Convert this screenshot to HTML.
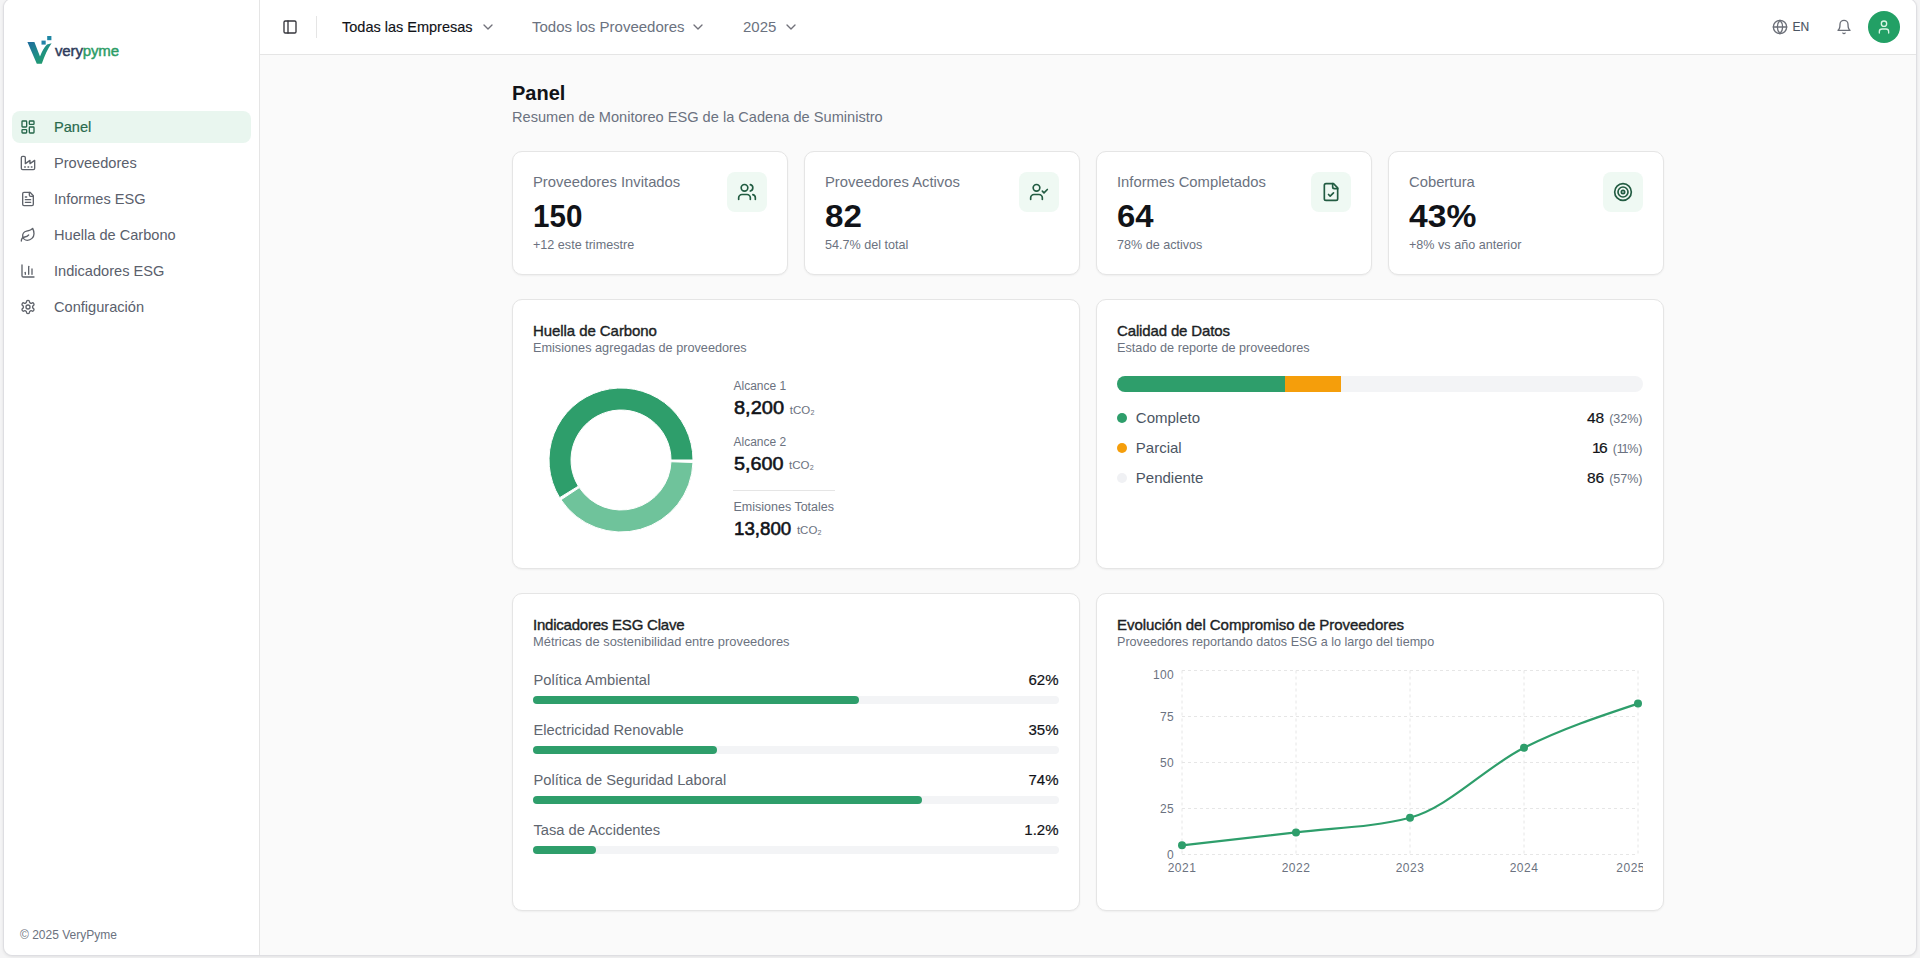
<!DOCTYPE html>
<html><head><meta charset="utf-8"><title>Panel</title>
<style>
*{box-sizing:border-box;margin:0;padding:0}
html,body{width:1920px;height:958px;overflow:hidden;background:#f4f4f5;font-family:"Liberation Sans", sans-serif;position:relative}
.t{position:absolute;white-space:nowrap;line-height:1}
.b{position:absolute}
.i{position:absolute;overflow:visible}
.card{position:absolute;background:#fff;border:1px solid #e5e5e5;border-radius:10px;box-shadow:0 1px 2px rgba(0,0,0,.05)}
</style></head><body>
<div class="b" style="left:3px;top:-2px;width:1914px;height:958px;border:1px solid #dedee2;border-radius:9px;background:#fafafa;overflow:hidden;box-shadow:0 1px 3px rgba(0,0,0,.08)"></div>
<div class="b" style="left:4px;top:-1px;width:256px;height:956px;background:#fff;border-right:1px solid #e5e5e5;border-radius:9px 0 0 9px"></div>
<div class="b" style="left:260px;top:-1px;width:1656px;height:56px;background:#fff;border-bottom:1px solid #e5e5e5;border-radius:0 9px 0 0"></div>
<svg class="i" style="left:25px;top:34px" width="30" height="32" viewBox="0 0 30 32">
<defs><linearGradient id="vg" x1="0" y1="0" x2="1" y2="1"><stop offset="0" stop-color="#1e6a9e"/><stop offset="0.5" stop-color="#1f8f86"/><stop offset="1" stop-color="#22a35e"/></linearGradient></defs>
<path d="M2.4 8 L9.4 8 L15 22.5 C17 17 19.3 12.8 22 10.4 L26.6 9.2 C22.8 14.5 19.8 21 16.8 29.8 L11.8 29.8 Z" fill="url(#vg)"/>
<rect x="16.5" y="6.6" width="4.2" height="4" fill="#2383a8"/><rect x="22.2" y="2" width="4.2" height="4.2" fill="#1e86a3"/>
</svg>
<div class="t" style="left:55px;top:43.10px;font-size:15px;font-weight:400;letter-spacing:-0.14px"><span style="color:#2e3b5b;-webkit-text-stroke:0.45px #2e3b5b">very</span><span style="color:#2c9c66;-webkit-text-stroke:0.45px #2c9c66">pyme</span></div>
<div class="b" style="left:12px;top:111px;width:239px;height:32px;background:#e9f6ef;border-radius:8px"></div>
<svg class="i" style="left:20px;top:119px;" width="16" height="16" viewBox="0 0 24 24" fill="none" stroke="#24664a" stroke-width="2" stroke-linecap="round" stroke-linejoin="round"><rect width="7" height="9" x="3" y="3" rx="1"/><rect width="7" height="5" x="14" y="3" rx="1"/><rect width="7" height="9" x="14" y="12" rx="1"/><rect width="7" height="5" x="3" y="16" rx="1"/></svg>
<div class="t" style="left:54.00px;top:119.94px;font-size:14.6px;color:#2a6a4e;font-weight:400;-webkit-text-stroke:0.2px #2a6a4e">Panel</div>
<svg class="i" style="left:20px;top:155px;" width="16" height="16" viewBox="0 0 24 24" fill="none" stroke="#5f636b" stroke-width="2" stroke-linecap="round" stroke-linejoin="round"><path d="M2 20a2 2 0 0 0 2 2h16a2 2 0 0 0 2-2V8l-7 5V8l-7 5V4a2 2 0 0 0-2-2H4a2 2 0 0 0-2 2Z"/><path d="M17 18h1"/><path d="M12 18h1"/><path d="M7 18h1"/></svg>
<div class="t" style="left:54.00px;top:155.94px;font-size:14.6px;color:#5a606c;font-weight:400;">Proveedores</div>
<svg class="i" style="left:20px;top:191px;" width="16" height="16" viewBox="0 0 24 24" fill="none" stroke="#5f636b" stroke-width="2" stroke-linecap="round" stroke-linejoin="round"><path d="M15 2H6a2 2 0 0 0-2 2v16a2 2 0 0 0 2 2h12a2 2 0 0 0 2-2V7Z"/><path d="M14 2v4a2 2 0 0 0 2 2h4"/><path d="M10 9H8"/><path d="M16 13H8"/><path d="M16 17H8"/></svg>
<div class="t" style="left:54.00px;top:191.94px;font-size:14.6px;color:#5a606c;font-weight:400;">Informes ESG</div>
<svg class="i" style="left:20px;top:227px;" width="16" height="16" viewBox="0 0 24 24" fill="none" stroke="#5f636b" stroke-width="2" stroke-linecap="round" stroke-linejoin="round"><path d="M11 20A7 7 0 0 1 9.8 6.1C15.5 5 17 4.48 19 2c1 2 2 4.18 2 8 0 5.5-4.78 10-10 10Z"/><path d="M2 21c0-3 1.85-5.36 5.08-6C9.5 14.52 12 13 13 12"/></svg>
<div class="t" style="left:54.00px;top:227.94px;font-size:14.6px;color:#5a606c;font-weight:400;">Huella de Carbono</div>
<svg class="i" style="left:20px;top:263px;" width="16" height="16" viewBox="0 0 24 24" fill="none" stroke="#5f636b" stroke-width="2" stroke-linecap="round" stroke-linejoin="round"><path d="M3 3v16a2 2 0 0 0 2 2h16"/><path d="M18 17V9"/><path d="M13 17V5"/><path d="M8 17v-3"/></svg>
<div class="t" style="left:54.00px;top:263.94px;font-size:14.6px;color:#5a606c;font-weight:400;">Indicadores ESG</div>
<svg class="i" style="left:20px;top:299px;" width="16" height="16" viewBox="0 0 24 24" fill="none" stroke="#5f636b" stroke-width="2" stroke-linecap="round" stroke-linejoin="round"><path d="M12.22 2h-.44a2 2 0 0 0-2 2v.18a2 2 0 0 1-1 1.73l-.43.25a2 2 0 0 1-2 0l-.15-.08a2 2 0 0 0-2.73.73l-.22.38a2 2 0 0 0 .73 2.73l.15.1a2 2 0 0 1 1 1.72v.51a2 2 0 0 1-1 1.74l-.15.09a2 2 0 0 0-.73 2.73l.22.38a2 2 0 0 0 2.73.73l.15-.08a2 2 0 0 1 2 0l.43.25a2 2 0 0 1 1 1.73V20a2 2 0 0 0 2 2h.44a2 2 0 0 0 2-2v-.18a2 2 0 0 1 1-1.73l.43-.25a2 2 0 0 1 2 0l.15.08a2 2 0 0 0 2.73-.73l.22-.39a2 2 0 0 0-.73-2.73l-.15-.08a2 2 0 0 1-1-1.74v-.5a2 2 0 0 1 1-1.74l.15-.09a2 2 0 0 0 .73-2.73l-.22-.38a2 2 0 0 0-2.73-.73l-.15.08a2 2 0 0 1-2 0l-.43-.25a2 2 0 0 1-1-1.73V4a2 2 0 0 0-2-2z"/><circle cx="12" cy="12" r="3"/></svg>
<div class="t" style="left:54.00px;top:299.94px;font-size:14.6px;color:#5a606c;font-weight:400;">Configuración</div>
<div class="t" style="left:20.00px;top:928.84px;font-size:12px;color:#6b7280;font-weight:400;">© 2025 VeryPyme</div>
<svg class="i" style="left:282px;top:19px;" width="16" height="16" viewBox="0 0 24 24" fill="none" stroke="#35353b" stroke-width="2" stroke-linecap="round" stroke-linejoin="round"><rect width="18" height="18" x="3" y="3" rx="2"/><path d="M9 3v18"/></svg>
<div class="b" style="left:316px;top:16px;width:1px;height:22px;background:#e5e5e5"></div>
<div class="t" style="left:342.00px;top:20.23px;font-size:14.5px;color:#111318;font-weight:400;-webkit-text-stroke:0.15px #111318">Todas las Empresas</div>
<svg class="i" style="left:480px;top:19.3px;" width="16" height="16" viewBox="0 0 24 24" fill="none" stroke="#71717a" stroke-width="2" stroke-linecap="round" stroke-linejoin="round"><path d="m6 9 6 6 6-6"/></svg>
<div class="t" style="left:532.00px;top:19.10px;font-size:15px;color:#6b7280;font-weight:400;">Todos los Proveedores</div>
<svg class="i" style="left:690px;top:19.3px;" width="16" height="16" viewBox="0 0 24 24" fill="none" stroke="#71717a" stroke-width="2" stroke-linecap="round" stroke-linejoin="round"><path d="m6 9 6 6 6-6"/></svg>
<div class="t" style="left:743.00px;top:19.10px;font-size:15px;color:#6b7280;font-weight:400;">2025</div>
<svg class="i" style="left:783px;top:19.3px;" width="16" height="16" viewBox="0 0 24 24" fill="none" stroke="#71717a" stroke-width="2" stroke-linecap="round" stroke-linejoin="round"><path d="m6 9 6 6 6-6"/></svg>
<svg class="i" style="left:1772px;top:19px;" width="16" height="16" viewBox="0 0 24 24" fill="none" stroke="#6b6f78" stroke-width="2" stroke-linecap="round" stroke-linejoin="round"><circle cx="12" cy="12" r="10"/><path d="M12 2a14.5 14.5 0 0 0 0 20 14.5 14.5 0 0 0 0-20"/><path d="M2 12h20"/></svg>
<div class="t" style="left:1792.50px;top:20.64px;font-size:12px;color:#4b5563;font-weight:400;-webkit-text-stroke:0.15px #4b5563">EN</div>
<svg class="i" style="left:1835.5px;top:19px;" width="16" height="16" viewBox="0 0 24 24" fill="none" stroke="#6b6f78" stroke-width="2" stroke-linecap="round" stroke-linejoin="round"><path d="M6 8a6 6 0 0 1 12 0c0 7 3 9 3 9H3s3-2 3-9"/><path d="M10.3 21a1.94 1.94 0 0 0 3.4 0"/></svg>
<div class="b" style="left:1868px;top:11px;width:32px;height:32px;border-radius:50%;background:#22a065"></div>
<svg class="i" style="left:1876px;top:19px;" width="16" height="16" viewBox="0 0 24 24" fill="none" stroke="#d8f5e4" stroke-width="2" stroke-linecap="round" stroke-linejoin="round"><path d="M19 21v-2a4 4 0 0 0-4-4H9a4 4 0 0 0-4 4v2"/><circle cx="12" cy="7" r="4"/></svg>
<div class="t" style="left:512.00px;top:83.27px;font-size:20px;color:#111318;font-weight:700;">Panel</div>
<div class="t" style="left:512.00px;top:109.64px;font-size:14.6px;color:#6b7280;font-weight:400;">Resumen de Monitoreo ESG de la Cadena de Suministro</div>
<div class="card" style="left:512px;top:151px;width:276px;height:124px"></div>
<div class="t" style="left:533.00px;top:174.67px;font-size:14.8px;color:#6b7280;font-weight:400;">Proveedores Invitados</div>
<div class="t" style="left:533.00px;top:200.76px;font-size:31px;color:#111318;font-weight:700;transform:scaleX(0.955);transform-origin:0 0">150</div>
<div class="t" style="left:533.00px;top:239.13px;font-size:12.6px;color:#6b7280;font-weight:400;">+12 este trimestre</div>
<div class="b" style="left:727px;top:172px;width:40px;height:40px;background:#eff9f3;border-radius:8px"></div>
<svg class="i" style="left:737px;top:182px;" width="20" height="20" viewBox="0 0 24 24" fill="none" stroke="#225c42" stroke-width="2" stroke-linecap="round" stroke-linejoin="round"><path d="M16 21v-2a4 4 0 0 0-4-4H6a4 4 0 0 0-4 4v2"/><circle cx="9" cy="7" r="4"/><path d="M22 21v-2a4 4 0 0 0-3-3.87"/><path d="M16 3.13a4 4 0 0 1 0 7.75"/></svg>
<div class="card" style="left:804px;top:151px;width:276px;height:124px"></div>
<div class="t" style="left:825.00px;top:174.67px;font-size:14.8px;color:#6b7280;font-weight:400;">Proveedores Activos</div>
<div class="t" style="left:825.00px;top:200.76px;font-size:31px;color:#111318;font-weight:700;transform:scaleX(1.07);transform-origin:0 0">82</div>
<div class="t" style="left:825.00px;top:239.13px;font-size:12.6px;color:#6b7280;font-weight:400;">54.7% del total</div>
<div class="b" style="left:1019px;top:172px;width:40px;height:40px;background:#eff9f3;border-radius:8px"></div>
<svg class="i" style="left:1029px;top:182px;" width="20" height="20" viewBox="0 0 24 24" fill="none" stroke="#225c42" stroke-width="2" stroke-linecap="round" stroke-linejoin="round"><path d="M16 21v-2a4 4 0 0 0-4-4H6a4 4 0 0 0-4 4v2"/><circle cx="9" cy="7" r="4"/><polyline points="16 11 18 13 22 9"/></svg>
<div class="card" style="left:1096px;top:151px;width:276px;height:124px"></div>
<div class="t" style="left:1117.00px;top:174.67px;font-size:14.8px;color:#6b7280;font-weight:400;">Informes Completados</div>
<div class="t" style="left:1117.00px;top:200.76px;font-size:31px;color:#111318;font-weight:700;transform:scaleX(1.06);transform-origin:0 0">64</div>
<div class="t" style="left:1117.00px;top:239.13px;font-size:12.6px;color:#6b7280;font-weight:400;">78% de activos</div>
<div class="b" style="left:1311px;top:172px;width:40px;height:40px;background:#eff9f3;border-radius:8px"></div>
<svg class="i" style="left:1321px;top:182px;" width="20" height="20" viewBox="0 0 24 24" fill="none" stroke="#225c42" stroke-width="2" stroke-linecap="round" stroke-linejoin="round"><path d="M15 2H6a2 2 0 0 0-2 2v16a2 2 0 0 0 2 2h12a2 2 0 0 0 2-2V7Z"/><path d="M14 2v4a2 2 0 0 0 2 2h4"/><path d="m9 15 2 2 4-4"/></svg>
<div class="card" style="left:1388px;top:151px;width:276px;height:124px"></div>
<div class="t" style="left:1409.00px;top:174.67px;font-size:14.8px;color:#6b7280;font-weight:400;">Cobertura</div>
<div class="t" style="left:1409.00px;top:200.76px;font-size:31px;color:#111318;font-weight:700;transform:scaleX(1.085);transform-origin:0 0">43%</div>
<div class="t" style="left:1409.00px;top:239.13px;font-size:12.6px;color:#6b7280;font-weight:400;">+8% vs año anterior</div>
<div class="b" style="left:1603px;top:172px;width:40px;height:40px;background:#eff9f3;border-radius:8px"></div>
<svg class="i" style="left:1613px;top:182px;" width="20" height="20" viewBox="0 0 24 24" fill="none" stroke="#225c42" stroke-width="2" stroke-linecap="round" stroke-linejoin="round"><circle cx="12" cy="12" r="10"/><circle cx="12" cy="12" r="6"/><circle cx="12" cy="12" r="2"/></svg>
<div class="card" style="left:512px;top:299px;width:568px;height:270px"></div>
<div class="t" style="left:533.00px;top:322.60px;font-size:15px;color:#1c1f25;font-weight:400;letter-spacing:-0.07px;-webkit-text-stroke:0.4px #1c1f25">Huella de Carbono</div>
<div class="t" style="left:533.00px;top:341.75px;font-size:12.7px;color:#6b7280;font-weight:400;">Emisiones agregadas de proveedores</div>
<div class="card" style="left:1096px;top:299px;width:568px;height:270px"></div>
<div class="t" style="left:1117.00px;top:322.60px;font-size:15px;color:#1c1f25;font-weight:400;letter-spacing:-0.14px;-webkit-text-stroke:0.4px #1c1f25">Calidad de Datos</div>
<div class="t" style="left:1117.00px;top:341.75px;font-size:12.7px;color:#6b7280;font-weight:400;">Estado de reporte de proveedores</div>
<div class="card" style="left:512px;top:593px;width:568px;height:318px"></div>
<div class="t" style="left:533.00px;top:616.70px;font-size:15px;color:#1c1f25;font-weight:400;letter-spacing:-0.22px;-webkit-text-stroke:0.4px #1c1f25">Indicadores ESG Clave</div>
<div class="t" style="left:533.00px;top:635.68px;font-size:12.9px;color:#6b7280;font-weight:400;">Métricas de sostenibilidad entre proveedores</div>
<div class="card" style="left:1096px;top:593px;width:568px;height:318px"></div>
<div class="t" style="left:1117.00px;top:616.70px;font-size:15px;color:#1c1f25;font-weight:400;letter-spacing:-0.04px;-webkit-text-stroke:0.4px #1c1f25">Evolución del Compromiso de Proveedores</div>
<div class="t" style="left:1117.00px;top:635.93px;font-size:12.6px;color:#6b7280;font-weight:400;">Proveedores reportando datos ESG a lo largo del tiempo</div>
<svg class="i" style="left:0;top:0" width="1920" height="958"><path d="M693.00,460.00 A72,72 0 1 0 559.63,497.66 L578.38,486.15 A50,50 0 1 1 671.00,460.00 Z" fill="#2e9e6b" stroke="#fff" stroke-width="1"/><path d="M560.99,499.78 A72,72 0 0 0 692.96,462.51 L670.97,461.74 A50,50 0 0 1 579.32,487.62 Z" fill="#6fc39b" stroke="#fff" stroke-width="1"/></svg>
<div class="t" style="left:733.50px;top:379.54px;font-size:12px;color:#6b7280;font-weight:400;">Alcance 1</div>
<div class="t" style="left:733.50px;top:399.26px;font-size:18px;color:#111318;font-weight:400;-webkit-text-stroke:0.55px #111318;transform:scaleX(1.11);transform-origin:0 0">8,200</div>
<div class="t" style="left:789.80px;top:404.77px;font-size:11.5px;color:#6b7280;font-weight:400;">tCO₂</div>
<div class="t" style="left:733.50px;top:435.54px;font-size:12px;color:#6b7280;font-weight:400;">Alcance 2</div>
<div class="t" style="left:733.50px;top:454.96px;font-size:18px;color:#111318;font-weight:400;-webkit-text-stroke:0.55px #111318;transform:scaleX(1.1);transform-origin:0 0">5,600</div>
<div class="t" style="left:789.00px;top:460.47px;font-size:11.5px;color:#6b7280;font-weight:400;">tCO₂</div>
<div class="b" style="left:733px;top:490px;width:102px;height:1px;background:#e5e5e5"></div>
<div class="t" style="left:733.50px;top:500.82px;font-size:12.5px;color:#6b7280;font-weight:400;">Emisiones Totales</div>
<div class="t" style="left:733.50px;top:519.96px;font-size:18px;color:#111318;font-weight:400;-webkit-text-stroke:0.55px #111318;transform:scaleX(1.04);transform-origin:0 0">13,800</div>
<div class="t" style="left:796.90px;top:525.47px;font-size:11.5px;color:#6b7280;font-weight:400;">tCO₂</div>
<div class="b" style="left:1117px;top:376px;width:526px;height:16px;background:#f3f4f6;border-radius:8px;overflow:hidden"></div>
<div class="b" style="left:1117px;top:376px;width:526px;height:16px;border-radius:8px;overflow:hidden"><div class="b" style="left:0;top:0;width:168px;height:16px;background:#2e9e6b"></div><div class="b" style="left:168px;top:0;width:56px;height:16px;background:#f59e0b"></div></div>
<div class="b" style="left:1117px;top:413px;width:10px;height:10px;border-radius:50%;background:#2e9e6b"></div>
<div class="t" style="left:1135.80px;top:409.70px;font-size:15px;color:#4b5563;font-weight:400;">Completo</div>
<div class="t" style="right:277.5px;top:409.68px;font-size:15.5px;color:#111318;-webkit-text-stroke:0.2px #111318">48<span style="font-size:12.5px;color:#6b7280;margin-left:5px;-webkit-text-stroke:0">(32%)</span></div>
<div class="b" style="left:1117px;top:443px;width:10px;height:10px;border-radius:50%;background:#f59e0b"></div>
<div class="t" style="left:1135.80px;top:439.70px;font-size:15px;color:#4b5563;font-weight:400;">Parcial</div>
<div class="t" style="right:277.5px;top:439.68px;font-size:15.5px;color:#111318;-webkit-text-stroke:0.2px #111318"><span style='letter-spacing:-1.6px'>1</span>6<span style="font-size:12.5px;color:#6b7280;margin-left:5px;-webkit-text-stroke:0">(<span style='letter-spacing:-1.3px'>11</span>%)</span></div>
<div class="b" style="left:1117px;top:473px;width:10px;height:10px;border-radius:50%;background:#f0f1f4"></div>
<div class="t" style="left:1135.80px;top:469.70px;font-size:15px;color:#4b5563;font-weight:400;">Pendiente</div>
<div class="t" style="right:277.5px;top:469.68px;font-size:15.5px;color:#111318;-webkit-text-stroke:0.2px #111318">86<span style="font-size:12.5px;color:#6b7280;margin-left:5px;-webkit-text-stroke:0">(57%)</span></div>
<div class="t" style="left:533.50px;top:673.36px;font-size:14.7px;color:#60666f;font-weight:400;">Política Ambiental</div>
<div class="t" style="right:861.50px;top:672.40px;font-size:15px;color:#111318;font-weight:400;-webkit-text-stroke:0.2px #111318">62%</div>
<div class="b" style="left:533px;top:696px;width:526px;height:8px;background:#f3f4f6;border-radius:4px"></div>
<div class="b" style="left:533px;top:696px;width:326px;height:8px;background:#2e9e6b;border-radius:4px"></div>
<div class="t" style="left:533.50px;top:723.36px;font-size:14.7px;color:#60666f;font-weight:400;">Electricidad Renovable</div>
<div class="t" style="right:861.50px;top:722.40px;font-size:15px;color:#111318;font-weight:400;-webkit-text-stroke:0.2px #111318">35%</div>
<div class="b" style="left:533px;top:746px;width:526px;height:8px;background:#f3f4f6;border-radius:4px"></div>
<div class="b" style="left:533px;top:746px;width:184px;height:8px;background:#2e9e6b;border-radius:4px"></div>
<div class="t" style="left:533.50px;top:773.36px;font-size:14.7px;color:#60666f;font-weight:400;">Política de Seguridad Laboral</div>
<div class="t" style="right:861.50px;top:772.40px;font-size:15px;color:#111318;font-weight:400;-webkit-text-stroke:0.2px #111318">74%</div>
<div class="b" style="left:533px;top:796px;width:526px;height:8px;background:#f3f4f6;border-radius:4px"></div>
<div class="b" style="left:533px;top:796px;width:389px;height:8px;background:#2e9e6b;border-radius:4px"></div>
<div class="t" style="left:533.50px;top:823.36px;font-size:14.7px;color:#60666f;font-weight:400;">Tasa de Accidentes</div>
<div class="t" style="right:861.50px;top:822.40px;font-size:15px;color:#111318;font-weight:400;-webkit-text-stroke:0.2px #111318">1.2%</div>
<div class="b" style="left:533px;top:846px;width:526px;height:8px;background:#f3f4f6;border-radius:4px"></div>
<div class="b" style="left:533px;top:846px;width:63px;height:8px;background:#2e9e6b;border-radius:4px"></div>
<svg class="i" style="left:0;top:0" width="1920" height="958"><g stroke="#e6e6e6" stroke-dasharray="3 3" stroke-width="1"><line x1="1182" y1="854.5" x2="1638" y2="854.5"/><line x1="1182" y1="808.5" x2="1638" y2="808.5"/><line x1="1182" y1="762.5" x2="1638" y2="762.5"/><line x1="1182" y1="716.5" x2="1638" y2="716.5"/><line x1="1182" y1="670.5" x2="1638" y2="670.5"/><line x1="1182" y1="670.5" x2="1182" y2="854.5"/><line x1="1296" y1="670.5" x2="1296" y2="854.5"/><line x1="1410" y1="670.5" x2="1410" y2="854.5"/><line x1="1524" y1="670.5" x2="1524" y2="854.5"/><line x1="1638" y1="670.5" x2="1638" y2="854.5"/></g><path d="M1182,845.30 C1220.00,841.16 1258.00,837.02 1296,832.42 C1334.00,827.82 1372.00,827.51 1410,817.70 C1448.00,807.89 1486.00,766.79 1524,747.78 C1562.00,728.77 1600.00,716.19 1638,703.62" fill="none" stroke="#2e9e6b" stroke-width="2.2"/><circle cx="1182" cy="845.30" r="4" fill="#2e9e6b"/><circle cx="1296" cy="832.42" r="4" fill="#2e9e6b"/><circle cx="1410" cy="817.70" r="4" fill="#2e9e6b"/><circle cx="1524" cy="747.78" r="4" fill="#2e9e6b"/><circle cx="1638" cy="703.62" r="4" fill="#2e9e6b"/></svg>
<div class="t" style="right:746.00px;top:848.74px;font-size:12px;color:#6b7280;font-weight:400;letter-spacing:0.3px">0</div>
<div class="t" style="right:746.00px;top:802.74px;font-size:12px;color:#6b7280;font-weight:400;letter-spacing:0.3px">25</div>
<div class="t" style="right:746.00px;top:756.74px;font-size:12px;color:#6b7280;font-weight:400;letter-spacing:0.3px">50</div>
<div class="t" style="right:746.00px;top:710.74px;font-size:12px;color:#6b7280;font-weight:400;letter-spacing:0.3px">75</div>
<div class="t" style="right:746.00px;top:668.74px;font-size:12px;color:#6b7280;font-weight:400;letter-spacing:0.3px">100</div>
<div class="t" style="left:1162px;width:40px;text-align:center;top:861.84px;font-size:12px;color:#6b7280;letter-spacing:0.5px">2021</div>
<div class="t" style="left:1276px;width:40px;text-align:center;top:861.84px;font-size:12px;color:#6b7280;letter-spacing:0.5px">2022</div>
<div class="t" style="left:1390px;width:40px;text-align:center;top:861.84px;font-size:12px;color:#6b7280;letter-spacing:0.5px">2023</div>
<div class="t" style="left:1504px;width:40px;text-align:center;top:861.84px;font-size:12px;color:#6b7280;letter-spacing:0.5px">2024</div>
<div class="b" style="left:1600px;top:855px;width:43px;height:25px;overflow:hidden"><div class="t" style="left:16.3px;top:6.84px;font-size:12px;color:#6b7280;letter-spacing:0.5px">2025</div></div>
</body></html>
